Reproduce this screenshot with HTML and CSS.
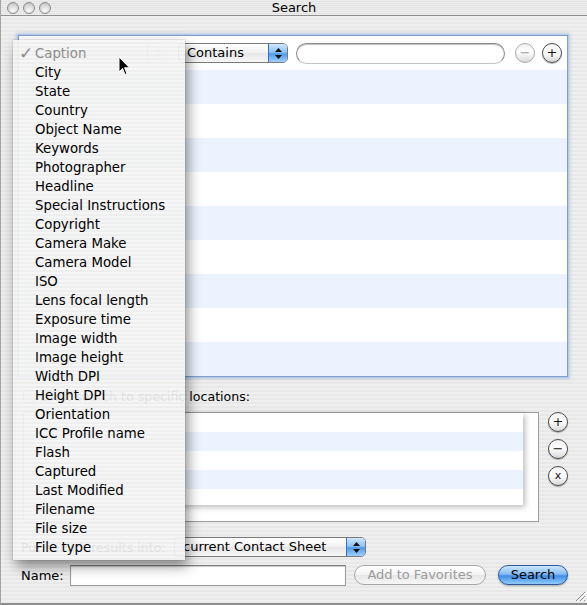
FILE: index.html
```html
<!DOCTYPE html>
<html>
	<head>
		<meta charset="utf-8">
		<title>Search</title>
		<link rel="stylesheet" href="styles.css">
	</head>
	<body>
		<div class="window">
			<div class="titlebar">
				<div class="lights"><span></span><span></span><span></span></div>
				<div class="title">Search</div>
			</div>

			<div class="content">
				<div class="criteria">
					<div class="row first">
						<div class="popup attr">
							<span class="text">Caption</span>
							<span class="cap"><svg width="7" height="11" viewBox="0 0 7 11"><path d="M3.5 0 L7 4 L0 4 Z M0 7 L7 7 L3.5 11 Z" fill="#c8c8c8"/></svg></span>
						</div>
						<div class="popup op">
							<span class="text">Contains</span>
							<span class="cap blue"><svg width="7" height="11" viewBox="0 0 7 11"><path d="M3.5 0 L7 4 L0 4 Z M0 7 L7 7 L3.5 11 Z" fill="#111"/></svg></span>
						</div>
						<input class="search-field" type="text">
						<button class="round off">&minus;</button>
						<button class="round">+</button>
					</div>
					<div class="row"></div>
					<div class="row"></div>
					<div class="row"></div>
					<div class="row"></div>
					<div class="row"></div>
					<div class="row"></div>
					<div class="row"></div>
					<div class="row"></div>
					<div class="row"></div>
				</div>

				<div class="limit">
					<span class="check"></span>
					<span class="limit-label">Limit search to specific locations:</span>
				</div>

				<div class="locations">
					<div class="loc-view">
						<div class="loc-rows"></div>
						<div class="vscroll"></div>
						<div class="hscroll"></div>
						<div class="corner"></div>
					</div>
					<div class="loc-btns">
						<button class="round">+</button>
						<button class="round">&minus;</button>
						<button class="round small">x</button>
					</div>
				</div>

				<div class="put-row">
					<span class="put-label">Put search results into:</span>
					<div class="popup dest">
						<span class="text">current Contact Sheet</span>
						<span class="cap blue"><svg width="7" height="11" viewBox="0 0 7 11"><path d="M3.5 0 L7 4 L0 4 Z M0 7 L7 7 L3.5 11 Z" fill="#111"/></svg></span>
					</div>
				</div>

				<div class="name-row">
					<span class="name-label">Name:</span>
					<input class="name-field" type="text">
					<button class="pill">Add to Favorites</button>
					<button class="pill default">Search</button>
				</div>
			</div>

			<svg class="grip" width="11" height="11" viewBox="0 0 11 11">
				<path d="M10 1 L1 10 M10 5 L5 10 M10 9 L9 10" stroke="#8a8a8a" stroke-width="1"/>
				<path d="M11 2 L2 11 M11 6 L6 11" stroke="#fff" stroke-width="1"/>
			</svg>

			<ul class="menu">
				<li class="item checked"><span class="tick">&#10003;</span>Caption</li>
				<li class="item">City</li>
				<li class="item">State</li>
				<li class="item">Country</li>
				<li class="item">Object Name</li>
				<li class="item">Keywords</li>
				<li class="item">Photographer</li>
				<li class="item">Headline</li>
				<li class="item">Special Instructions</li>
				<li class="item">Copyright</li>
				<li class="item">Camera Make</li>
				<li class="item">Camera Model</li>
				<li class="item">ISO</li>
				<li class="item">Lens focal length</li>
				<li class="item">Exposure time</li>
				<li class="item">Image width</li>
				<li class="item">Image height</li>
				<li class="item">Width DPI</li>
				<li class="item">Height DPI</li>
				<li class="item">Orientation</li>
				<li class="item">ICC Profile name</li>
				<li class="item">Flash</li>
				<li class="item">Captured</li>
				<li class="item">Last Modified</li>
				<li class="item">Filename</li>
				<li class="item">File size</li>
				<li class="item">File type</li>
			</ul>

			<svg class="cursor" width="13" height="20" viewBox="0 0 13 20">
				<path d="M1 1 L1 16 L4.5 12.5 L7 18.5 L9 17.6 L6.6 11.8 L11.5 11.8 Z" fill="#000" stroke="#fff" stroke-width="1"/>
			</svg>
		</div>
	</body>
</html>
```

FILE: styles.css
```css
* {
	margin: 0;
	padding: 0;
	box-sizing: border-box;
}

body {
	font-family: "DejaVu Sans", "Liberation Sans", sans-serif;
	font-size: 13px;
	color: #000;
	background: #fff;
}

ul {
	list-style: none;
}

button,
input {
	font-family: inherit;
	font-size: 13px;
	outline: none;
}

.window {
	width: 587px;
	height: 605px;
	position: relative;
	overflow: hidden;
	background: repeating-linear-gradient(#efefef 0 2px, #e8e8e8 2px 4px);
	border-left: 1px solid #a4a4a4;
	border-bottom: 2px solid #8e8e8e;
}

/* title bar */
.titlebar {
	height: 16px;
	display: flex;
	align-items: center;
	border-bottom: 1px solid #8f8f8f;
	background: repeating-linear-gradient(#ececec 0 1px, #e4e4e4 1px 2px);
	position: relative;
}

.lights {
	display: flex;
	gap: 4px;
	padding-left: 6px;
}

.lights span {
	width: 12px;
	height: 12px;
	border-radius: 50%;
	border: 1px solid #8c8c8c;
	background: radial-gradient(circle at 50% 75%, #fafafa 0, #dcdcdc 50%, #b9b9b9 100%);
}

.title {
	position: absolute;
	left: 0;
	right: 0;
	top: 0;
	text-align: center;
	line-height: 15px;
	font-size: 13px;
}

.content {
	display: flex;
	flex-direction: column;
	padding-left: 17px;
}

/* criteria box */
.criteria {
	margin-top: 19px;
	width: 550px;
	border: 1px solid #7f9fcd;
	box-shadow: 0 0 0 1px #b6cbe8, 0 0 3px 2px rgba(110, 150, 210, 0.35);
	background: #fff;
}

.criteria .row {
	height: 34px;
}

.criteria .row:nth-child(even) {
	background: #ecf3fe;
}

.criteria .row.first {
	display: flex;
	align-items: center;
	padding-left: 6px;
}

/* popups */
.popup {
	height: 20px;
	display: flex;
	align-items: center;
	border: 1px solid #7a7a7a;
	border-radius: 5px;
	background: linear-gradient(#ffffff, #f1f1f1 50%, #e6e6e6 51%, #f7f7f7);
	overflow: hidden;
}

.popup .text {
	flex: 1;
	padding-left: 8px;
	white-space: nowrap;
	line-height: 18px;
}

.popup .cap {
	width: 19px;
	height: 100%;
	display: flex;
	align-items: center;
	justify-content: center;
	border-left: 1px solid #9a9a9a;
}

.popup .cap.blue {
	border-left: 1px solid #3b6fb5;
	background: linear-gradient(#cfe6ff, #8ec3f7 45%, #4f9ae8 55%, #9fd0ff);
}

.popup.attr {
	width: 142px;
	border-color: #d6d6d6;
	color: #a8a8a8;
}

.popup.op {
	width: 110px;
	margin-left: 11px;
}

.search-field {
	width: 209px;
	height: 21px;
	margin-left: 8px;
	border: 1px solid #8a8a8a;
	border-bottom-color: #c4c4c4;
	border-radius: 11px;
	background: #fff;
	box-shadow: inset 0 1px 1px rgba(0, 0, 0, 0.25);
}

.round {
	width: 20px;
	height: 20px;
	border-radius: 50%;
	border: 1px solid #4a4a4a;
	background: linear-gradient(#f2f2f2, #ffffff 45%, #d9d9d9 100%);
	box-shadow: 0 1px 1px rgba(0, 0, 0, 0.3);
	font-size: 13px;
	line-height: 16px;
	text-align: center;
	color: #111;
	padding: 0;
}

.round.small {
	font-size: 11px;
}

.criteria .round {
	margin-left: 10px;
}

.criteria .round + .round {
	margin-left: 7px;
}

.round.off {
	border-color: #a9a9a9;
	color: #9a9a9a;
	box-shadow: none;
}

/* locations */
.limit {
	margin-top: 12px;
	height: 14px;
	display: flex;
	align-items: center;
	padding-left: 5px;
	white-space: nowrap;
}

.limit-label {
	font-size: 12.6px;
}

.check {
	width: 13px;
	height: 13px;
	margin-right: 4px;
	border: 1px solid #8b8b8b;
	border-radius: 2px;
	background: linear-gradient(#fdfdfd, #e2e2e2);
}

.locations {
	margin-top: 9px;
	display: flex;
	padding-left: 5px;
}

.loc-view {
	width: 516px;
	height: 110px;
	border: 1px solid #9d9d9d;
	display: grid;
	grid-template-columns: 1fr 15px;
	grid-template-rows: 1fr 16px;
	background: #fff;
}

.loc-rows {
	background: repeating-linear-gradient(#fff 0 19px, #ecf3fe 19px 38px);
	box-shadow: 2px 2px 6px rgba(0, 0, 0, 0.28);
	position: relative;
	z-index: 1;
}

.loc-btns {
	margin-left: 9px;
	display: flex;
	flex-direction: column;
	gap: 7px;
}

/* bottom rows */
.put-row {
	margin-top: 15px;
	height: 20px;
	display: flex;
	align-items: center;
	padding-left: 3px;
}

.put-label {
	width: 153px;
	white-space: nowrap;
	overflow: hidden;
	font-size: 12.6px;
}

.popup.dest {
	width: 192px;
}

.name-row {
	margin-top: 7px;
	height: 22px;
	display: flex;
	align-items: center;
	padding-left: 3px;
}

.name-label {
	width: 49px;
}

.name-field {
	width: 276px;
	height: 21px;
	border: 1px solid #9a9a9a;
	border-top-color: #7c7c7c;
	background: #fff;
	box-shadow: inset 0 1px 1px rgba(0, 0, 0, 0.2);
}

.pill {
	height: 20px;
	border-radius: 10px;
	border: 1px solid #a6a6a6;
	background: linear-gradient(#ffffff, #f3f3f3 50%, #e7e7e7 51%, #f6f6f6);
	color: #9b9b9b;
	width: 132px;
	margin-left: 8px;
	line-height: 18px;
}

.pill.default {
	width: 70px;
	margin-left: 12px;
	color: #000;
	border-color: #2c5a9c;
	background: linear-gradient(#cde6ff, #86bdf3 45%, #3f8ee4 55%, #8fcbff);
	box-shadow: 0 1px 2px rgba(0, 0, 0, 0.3);
}

.grip {
	position: absolute;
	right: 1px;
	bottom: 1px;
}

/* open popup menu */
.menu {
	position: absolute;
	left: 12px;
	top: 40px;
	width: 172px;
	height: 520px;
	padding-top: 4px;
	background: repeating-linear-gradient(rgba(246, 246, 246, 0.93) 0 2px, rgba(238, 238, 238, 0.93) 2px 4px);
	box-shadow: 3px 6px 12px rgba(0, 0, 0, 0.45), 0 0 1px rgba(0, 0, 0, 0.4);
	z-index: 5;
	font-size: 13.3px;
}

.menu .item {
	height: 19px;
	line-height: 19px;
	padding-left: 22px;
	position: relative;
	white-space: nowrap;
}

.menu .item.checked {
	color: #8d8d8d;
}

.menu .tick {
	position: absolute;
	left: 6px;
	top: 0;
	font-size: 17px;
	line-height: 19px;
	font-weight: bold;
}

.cursor {
	position: absolute;
	left: 117px;
	top: 56px;
	z-index: 10;
}
```
